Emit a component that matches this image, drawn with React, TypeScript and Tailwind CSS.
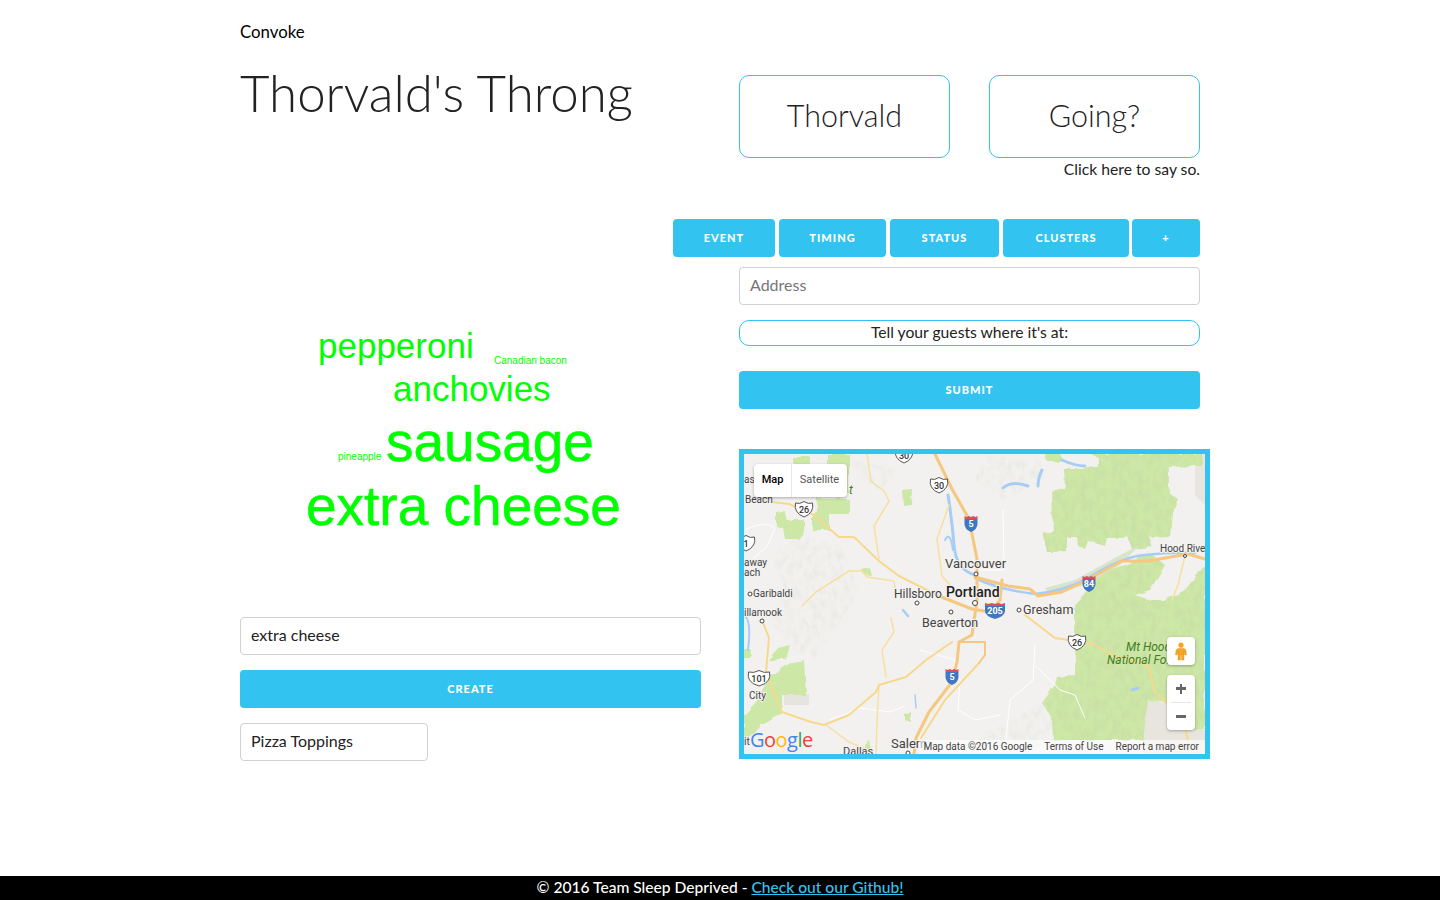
import React from "react";

const FONT = "font-['Lato','Open_Sans',sans-serif]";

// one US highway shield, centred on x,y
const UsShield = ({ x, y, label, wide }: { x: number; y: number; label: string; wide?: boolean }) => {
  const w = wide ? 10.5 : 8.5;
  return (
    <g>
      <path
        d={`M${x - w} ${y - 6} q${w / 2} 1.5 ${w} -1.5 q${w / 2} 3 ${w} 1.5 q1 5 -1 8 q-2 4 -${w - 1} 6 q-${w - 3} -2 -${w - 1} -6 q-2 -3 -1 -8 z`}
        fill="#fff"
        stroke="#555"
        strokeWidth="1"
      />
      <text x={x} y={y + 3.5} textAnchor="middle" fontSize="9" fontWeight="500" fill="#333" fontFamily="Roboto, sans-serif">
        {label}
      </text>
    </g>
  );
};

const Interstate = ({ x, y, label, wide }: { x: number; y: number; label: string; wide?: boolean }) => {
  const w = wide ? 10 : 6.5;
  return (
    <g>
      <path d={`M${x - w} ${y - 2} h${w * 2} v5 q0 5 -${w} 8 q-${w} -3 -${w} -8 z`} fill="#3f77c2" />
      <path d={`M${x - w} ${y - 5} l${w / 3} 1 l${w / 3} -1 l${w / 3} 1 l${w / 3} -1 l${w / 3} 1 l${w / 3} -1 v3 h-${w * 2} z`} fill="#d9505a" />
      <text x={x} y={y + 6} textAnchor="middle" fontSize="9" fontWeight="700" fill="#fff" fontFamily="Roboto, sans-serif">
        {label}
      </text>
    </g>
  );
};

const Place = ({ x, y, size = 10, weight = 400, fill = "#444", anchor = "start", italic, children }: any) => (
  <text
    x={x}
    y={y}
    fontSize={size}
    fontWeight={weight}
    fill={fill}
    textAnchor={anchor}
    fontStyle={italic ? "italic" : "normal"}
    fontFamily="Roboto, sans-serif"
    stroke="#f2f1ef"
    strokeWidth="2"
    paintOrder="stroke"
  >
    {children}
  </text>
);

const Dot = ({ x, y, r = 2 }: { x: number; y: number; r?: number }) => (
  <circle cx={x} cy={y} r={r} fill="#fff" stroke="#444" strokeWidth="1" />
);

const FOREST_SHAPES = [
  "1090,454 1202,454 1202,466 1168,467 1168,492 1178,499 1172,512 1170,536 1150,537 1152,547 1132,549 1128,537 1107,537 1105,546 1088,541 1085,549 1078,546 1077,537 1067,537 1067,552 1047,552 1043,532 1053,532 1052,492 1065,489 1064,469 1082,469 1092,466 1098,467 1098,457",
  "1075,605 1075,675 1057,677 1055,685 1042,703 1052,718 1053,740 1143,740 1148,700 1167,703 1185,728 1205,730 1205,565 1185,590 1165,600 1150,600 1135,595 1150,590 1165,565 1150,553 1125,565 1100,572 1085,595",
];

const SMALL_FORESTS = [
  "1045,454 1060,454 1060,461 1047,461",
  "827,454 849,454 849,493 827,493",
  "792,457 810,457 810,464 792,464",
  "817,499 849,499 849,514 829,514 829,530 812,530 812,520 817,512",
  "776,512 784,510 787,520 804,520 804,532 798,539 785,539 783,528 776,526",
  "902,490 912,489 911,504 903,505",
  "778,648 790,645 786,660 768,660",
  "792,662 804,660 806,695 782,695 782,714 762,725 744,737 744,715 756,702 769,677",
  "744,650 752,650 752,658 744,658",
  "744,720 760,727 744,745",
  "862,570 870,568 872,576 864,575",
  "905,715 911,712 911,722 905,720",
  "865,745 870,741 872,752 865,752",
];

const MapDrawing = () => (
  <svg viewBox="744 454 461 300" className="block w-full h-full">
    <defs>
      {/* chewed forest edges */}
      <filter id="rough" x="-5%" y="-5%" width="110%" height="110%">
        <feTurbulence type="fractalNoise" baseFrequency="0.09" numOctaves="2" seed="4" />
        <feDisplacementMap in="SourceGraphic" scale="5" />
      </filter>
      {/* speckled hill relief, dark flecks inside the shape only */}
      <filter id="relief" x="0" y="0" width="100%" height="100%">
        <feTurbulence type="fractalNoise" baseFrequency="0.16 0.1" numOctaves="3" seed="9" />
        <feColorMatrix type="matrix" values="0 0 0 0 0.45  0 0 0 0 0.5  0 0 0 0 0.38  0 0 1.4 0 -0.55" />
        <feComposite in2="SourceAlpha" operator="in" />
      </filter>
    </defs>

    <rect x="744" y="454" width="461" height="300" fill="#f2f1ef" />

    {/* beige land on the east edge */}
    <polygon points="1143,700 1167,703 1185,728 1205,730 1205,754 1143,754" fill="#e8e5de" />
    <polygon points="1195,454 1205,454 1205,505 1195,495" fill="#e8e5de" />
    <polygon points="784,694 809,694 809,705 784,705" fill="#e6e4df" />

    {/* terrain shading */}
    <g filter="url(#relief)" fill="#000" opacity="0.22">
      <polygon points="770,555 800,535 840,545 860,590 835,630 815,660 790,650 770,620 785,590" />
      <polygon points="850,460 900,470 880,490 860,480" />
      <polygon points="985,455 1040,460 1045,480 1000,500 975,480" />
      <polygon points="1150,690 1040,750 950,750 1040,705" />
    </g>

    {/* forests */}
    <g fill="#cde7a6" filter="url(#rough)">
      {FOREST_SHAPES.map((p) => (
        <polygon key={p} points={p} />
      ))}
      {SMALL_FORESTS.map((p) => (
        <polygon key={p} points={p} />
      ))}
    </g>
    <g filter="url(#relief)" fill="#000" opacity="0.3">
      {FOREST_SHAPES.map((p) => (
        <polygon key={p} points={p} />
      ))}
    </g>
    <polygon points="1045,588 1075,580 1120,555 1140,545 1120,565 1085,585 1050,595" fill="#d9e5c9" />

    {/* water */}
    <g fill="none" stroke="#a7cdf5" strokeLinecap="round">
      <path d="M948 495 Q952 520 954 545 T975 575" strokeWidth="3" />
      <path d="M945 540 Q950 530 953 550" strokeWidth="2" />
      <path d="M1062 460 Q1075 466 1085 466" strokeWidth="3" />
      <path d="M1003 488 Q1012 480 1028 486" strokeWidth="3" />
      <path d="M1042 470 Q1038 478 1038 486" strokeWidth="3" />
      <path d="M975 578 Q1000 590 1035 594 Q1060 592 1085 580 Q1120 557 1145 555 Q1170 552 1195 553" strokeWidth="2.5" />
      <path d="M915 695 L916 708" strokeWidth="1.5" />
      <path d="M903 610 L908 616" strokeWidth="2.5" />
      <path d="M1132 690 L1138 688" strokeWidth="3" />
      <path d="M744 615 Q752 620 748 650" strokeWidth="2" />
    </g>

    {/* minor roads */}
    <g fill="none" stroke="#fff" strokeWidth="1">
      <path d="M744 530 Q765 520 775 528 L768 545 L752 560" />
      <path d="M1003 510 L1004 570 L975 570" />
      <path d="M920 650 L955 660 L960 680 L958 710 L975 720 L1000 715" />
      <path d="M1035 645 L1033 680 L1010 700 L1005 750" />
      <path d="M1035 665 L1060 690 L1075 695 L1085 718" />
      <path d="M830 720 L860 708 L890 712 L905 706" />
    </g>
    <g fill="none" stroke="#f8dfa0" strokeWidth="1.5" strokeLinecap="round" strokeLinejoin="round">
      <path d="M867 454 L871 481 L884 491 L889 501 L874 526 L879 559" />
      <path d="M802 606 L816 592 L849 571 L862 571 L867 577 L894 581 L896 596" />
      <path d="M937 539 L949 505" />
      <path d="M937 539 L942 576 L956 592" />
      <path d="M891 618 L894 632 L882 650 L886 677" />
      <path d="M879 685 L877 722 L876 754" />
      <path d="M826 725 L849 742 L872 752" />
      <path d="M1185 556 L1178 585 L1172 600" />
    </g>
    <g fill="none" stroke="#f7d98d" strokeWidth="2" strokeLinecap="round" strokeLinejoin="round">
      <path d="M762 620 L769 638 L766 672 L782 712 L811 722 L824 725 L849 715 L876 692 L879 685 L906 677 L926 660 L952 642" />
      <path d="M746 499 L789 504 L812 514 L839 537 L854 537 L879 561 L899 576 L939 596" />
      <path d="M1025 615 L1055 638 L1068 640 L1092 643 L1112 655 L1148 665 L1155 692 L1167 703 L1185 728 L1188 740" />
      <path d="M921 738 L945 700 L979 663" />
    </g>
    <g fill="none" stroke="#f6c77e" strokeWidth="3" strokeLinecap="round" strokeLinejoin="round">
      <path d="M935 454 L952 489 L969 519 L977 559 L977 600 L972 635 L959 642 L957 662 L952 682 L929 712 L916 738 L914 754" />
      <path d="M975 577 L1008 586 L1030 589 L1038 596 L1062 592 L1085 581 L1122 561 L1148 561 L1188 554 L1205 559" />
      <path d="M939 596 L972 609 L990 612 L1000 600 L1002 580" />
      <path d="M960 642 L985 642 L985 655 L979 663" strokeWidth="2" />
    </g>

    {/* shields */}
    <UsShield x={804} y={509} label="26" />
    <UsShield x={939} y={485} label="30" />
    <UsShield x={904} y={455} label="30" />
    <UsShield x={1077} y={642} label="26" />
    <UsShield x={759} y={678} label="101" wide />
    <UsShield x={746} y={543} label="1" />
    <Interstate x={971} y={521} label="5" />
    <Interstate x={952} y={674} label="5" />
    <Interstate x={1089} y={581} label="84" />
    <Interstate x={995} y={608} label="205" wide />

    {/* places */}
    <Place x={744} y={483} size={10}>asi</Place>
    <Place x={745} y={503} size={10}>Beach</Place>
    <Place x={744} y={566} size={10}>away</Place>
    <Place x={744} y={576} size={10}>ach</Place>
    <Place x={753} y={597} size={10}>Garibaldi</Place>
    <Dot x={750} y={594} />
    <Place x={744} y={616} size={10}>illamook</Place>
    <Dot x={762} y={621} />
    <Place x={749} y={699} size={10}>City</Place>
    <Place x={744} y={745} size={10}>it</Place>
    <Place x={894} y={598} size={12}>Hillsboro</Place>
    <Dot x={917} y={603} />
    <Place x={945} y={568} size={13}>Vancouver</Place>
    <Dot x={976} y={574} />
    <Place x={946} y={597} size={14} weight={500} fill="#222">Portland</Place>
    <Dot x={975} y={603} r={2.5} />
    <Place x={922} y={627} size={12.5}>Beaverton</Place>
    <Dot x={951} y={612} />
    <Place x={1023} y={614} size={12.5}>Gresham</Place>
    <Dot x={1019} y={610} />
    <Place x={1160} y={552} size={10}>Hood Rive</Place>
    <Dot x={1185} y={556} r={1.5} />
    <Place x={891} y={748} size={13}>Salem</Place>
    <Dot x={908} y={753} />
    <Place x={843} y={755} size={11}>Dallas</Place>
    <text x={1126} y={651} fontSize="12" fontStyle="italic" fill="#3f7d1e" fontFamily="Roboto, sans-serif">Mt Hood</text>
    <text x={1107} y={664} fontSize="12" fontStyle="italic" fill="#3f7d1e" fontFamily="Roboto, sans-serif">National Forest</text>
    <text x={849} y={494} fontSize="12" fontStyle="italic" fill="#3f7d1e" fontFamily="Roboto, sans-serif">t</text>
  </svg>
);

const Pegman = () => (
  <svg viewBox="0 0 14 22" className="w-[12px] h-[19px]">
    <circle cx="7" cy="3.6" r="3" fill="#f5a623" />
    <path d="M3.5 7.5 H10.5 Q12.5 8 12.8 10 L13.5 15 H11.5 L10.5 11 V21 H7.6 V15 H6.4 V21 H3.5 V11 L2.5 15 H0.5 L1.2 10 Q1.5 8 3.5 7.5 Z" fill="#f5a623" stroke="#d08a14" strokeWidth="0.4" />
  </svg>
);

const MapPanel = () => (
  <div className="relative w-[471px] h-[310px] border-[5px] border-[#33c3f0] overflow-hidden font-['Roboto',sans-serif]">
    <MapDrawing />

    <div className="absolute left-[10px] top-[10px] flex h-[33px] bg-white rounded-sm shadow-[0_1px_3px_rgba(0,0,0,0.3)] text-[11px]">
      <span className="w-[38px] flex items-center justify-center font-medium text-black border-r border-[#e6e6e6]">Map</span>
      <span className="w-[55px] flex items-center justify-center text-[#565656]">Satellite</span>
    </div>

    <div className="absolute left-[423px] top-[183px] w-[28px] h-[28px] bg-white rounded-sm shadow-[0_1px_3px_rgba(0,0,0,0.3)] flex items-center justify-center">
      <Pegman />
    </div>

    <div className="absolute left-[423px] top-[221px] w-[28px] h-[55px] bg-white rounded-sm shadow-[0_1px_3px_rgba(0,0,0,0.3)] flex flex-col items-center text-[#666]">
      <div className="h-[27px] w-full flex items-center justify-center relative">
        <div className="w-[10px] h-[2.5px] bg-[#666]" />
        <div className="absolute w-[2.5px] h-[10px] bg-[#666]" />
      </div>
      <div className="w-[20px] h-px bg-[#e6e6e6]" />
      <div className="h-[27px] w-full flex items-center justify-center">
        <div className="w-[10px] h-[2.5px] bg-[#666]" />
      </div>
    </div>

    <div className="absolute left-[6px] bottom-[2px] text-[20px] leading-[24px] font-medium font-['Open_Sans',sans-serif] tracking-[-0.5px]">
      <span className="text-[#4285f4]">G</span>
      <span className="text-[#ea4335]">o</span>
      <span className="text-[#fbbc05]">o</span>
      <span className="text-[#4285f4]">g</span>
      <span className="text-[#34a853]">l</span>
      <span className="text-[#ea4335]">e</span>
    </div>

    <div className="absolute right-0 bottom-0 h-[14px] pb-[1px] flex items-center gap-3 pl-[4px] pr-[6px] bg-white/60 text-[10px] text-[#444] whitespace-nowrap">
      <span>Map data ©2016 Google</span>
      <span>Terms of Use</span>
      <span>Report a map error</span>
    </div>
  </div>
);

const WordCloud = () => (
  <svg viewBox="0 0 461 260" className="block w-[461px] h-[260px]" fill="#00ff00" fontFamily="'Liberation Sans', Arial, sans-serif">
    <text x="78" y="57" fontSize="35">pepperoni</text>
    <text x="254" y="63" fontSize="10">Canadian bacon</text>
    <text x="153" y="100" fontSize="35">anchovies</text>
    <text x="146" y="160" fontSize="55" fontWeight="400" stroke="#00ff00" strokeWidth="0.5">sausage</text>
    <text x="98" y="159" fontSize="10">pineapple</text>
    <text x="66" y="224" fontSize="55" stroke="#00ff00" strokeWidth="0.5">extra cheese</text>
  </svg>
);

const Tab = ({ label, width }: { label: string; width: string }) => (
  <button className={`${width} h-[38px] rounded bg-[#33c3f0] text-white text-[11px] font-black uppercase tracking-[1px]`}>
    {label}
  </button>
);

const App = () => {
  return (
    <div className={`h-[900px] flex flex-col bg-white text-[#222] ${FONT}`}>
      <main className="flex-1 w-[960px] mx-auto flex gap-[38px]">
        {/* Left column */}
        <div className="w-[461px] flex flex-col">
          <p className="pt-[22px] h-[53px] text-[16.8px] leading-[20px] text-black">Convoke</p>
          <h1 className="text-[51px] leading-[40px] h-[40px] font-light mt-[20px] mb-[188px] whitespace-nowrap">Thorvald's Throng</h1>
          <WordCloud />
          <input
            readOnly
            value="extra cheese"
            className="mt-[56px] h-[38px] w-full px-[10px] pb-[4px] border border-[#d1d1d1] rounded text-[16px] text-[#222]"
          />
          <button className="mt-[15px] h-[38px] w-full rounded bg-[#33c3f0] text-white text-[11px] font-black uppercase tracking-[1px]">
            Create
          </button>
          <input
            readOnly
            value="Pizza Toppings"
            className="mt-[15px] h-[38px] w-[188px] px-[10px] pb-[4px] border border-[#d1d1d1] rounded text-[16px] text-[#222]"
          />
        </div>

        {/* Right column */}
        <div className="w-[461px] flex flex-col">
          <div className="mt-[75px] flex justify-between">
            <button className="w-[211px] h-[83px] pb-[2px] border border-[#33c3f0] rounded-[10px] text-[30.5px] font-light">Thorvald</button>
            <button className="w-[211px] h-[83px] pb-[2px] border border-[#33c3f0] rounded-[10px] text-[30.5px] font-light">Going?</button>
          </div>
          <p className="mt-[1px] h-[20px] text-right text-[15.7px] leading-[20px]">Click here to say so.</p>

          <div className="mt-[40px] ml-[-66px] flex gap-[4px]">
            <Tab label="Event" width="w-[102px]" />
            <Tab label="Timing" width="w-[107px]" />
            <Tab label="Status" width="w-[109px]" />
            <Tab label="Clusters" width="w-[126px]" />
            <Tab label="+" width="w-[68px] -ml-px" />
          </div>

          <input
            readOnly
            placeholder="Address"
            className="mt-[10px] h-[38px] w-full px-[10px] pb-[4px] border border-[#d1d1d1] rounded text-[16px] placeholder:text-[#757575]"
          />
          <div className="mt-[15px] h-[26px] pb-[1px] border border-[#33c3f0] rounded-[10px] flex items-center justify-center text-[15.7px]">
            Tell your guests where it's at:
          </div>
          <button className="mt-[25px] h-[38px] w-full rounded bg-[#33c3f0] text-white text-[11px] font-black uppercase tracking-[1px]">
            Submit
          </button>
          <div className="mt-[40px]">
            <MapPanel />
          </div>
        </div>
      </main>

      <footer className="h-[24px] bg-black text-white text-center text-[15.6px] leading-[23px] font-medium">
        © 2016 Team Sleep Deprived - <a href="#" className="text-[#33c3f0] underline">Check out our Github!</a>
      </footer>
    </div>
  );
};

export default App;
